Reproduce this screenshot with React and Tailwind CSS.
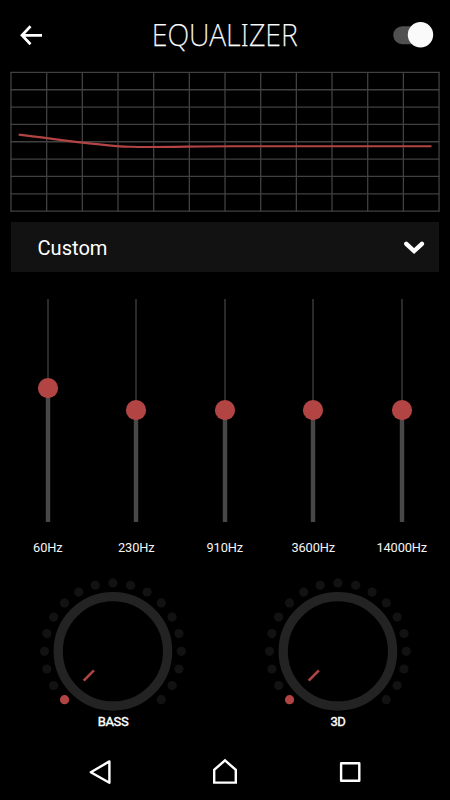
const bands = [
  { label: "60Hz", value: 89.2 },
  { label: "230Hz", value: 111.2 },
  { label: "910Hz", value: 111.2 },
  { label: "3600Hz", value: 111.2 },
  { label: "14000Hz", value: 111.2 },
];

function ResponseGraph() {
  const columns = Array.from({ length: 13 }, (_, i) => 1 + i * 35.67);
  const rows = Array.from({ length: 9 }, (_, i) => 1.4 + i * 17.34);
  return (
    <svg className="ml-2.5 block h-[141px] w-[430px] shrink-0" viewBox="0 0 430 141" fill="none">
      <g stroke="#414141" strokeWidth="1.3">
        {columns.map((x) => (
          <line key={x} x1={x} x2={x} y1="0.9" y2="140.6" />
        ))}
        {rows.map((y) => (
          <line key={y} x1="0.5" x2="429.5" y1={y} y2={y} />
        ))}
      </g>
      <path d="M8.7 63.6C45 67.8 88 74.8 120 75.8C155 76.5 180 75.2 225 75.2H421.5" stroke="#b34444" strokeWidth="2.1" />
    </svg>
  );
}

function Band({ label, value }) {
  return (
    <div className="flex flex-col items-center">
      <svg className="block h-[223px] w-6" viewBox="0 0 24 223">
        <rect x="11.35" y="0" width="1.3" height="223" fill="#414141" />
        <rect x="9.8" y={value} width="4.4" height={223 - value} fill="#484848" />
        <circle cx="12" cy={value} r="10.1" fill="#b34444" />
      </svg>
      <span className="mt-[17px] text-[12.8px] leading-[18px] tracking-[-0.1px] text-[#f5f5f5]">{label}</span>
    </div>
  );
}

function Knob({ label }) {
  const dots = Array.from({ length: 19 }, (_, i) => ((-135 + i * 15) * Math.PI) / 180);
  return (
    <div className="flex w-[225px] flex-col items-center">
      <svg className="block h-[136px] w-[148px]" viewBox="0 0 148 136" fill="none">
        <circle cx="73.9" cy="74.3" r="54.7" stroke="#232323" strokeWidth="9.3" />
        {dots.map((a, i) => (
          <circle
            key={i}
            cx={73.9 + 68.4 * Math.sin(a)}
            cy={74.3 - 68.4 * Math.cos(a)}
            r="4.6"
            fill={i === 0 ? "#b34444" : "#121212"}
          />
        ))}
        <path d="M44.7 103.6L54.9 93.4" stroke="#b34444" strokeWidth="2.6" />
      </svg>
      <span className="pl-px text-[13px] leading-[18px] tracking-[-0.4px] text-white [-webkit-text-stroke:0.4px_white]">{label}</span>
    </div>
  );
}

export default function App() {
  return (
    <main className="flex h-[800px] w-[450px] flex-col overflow-hidden bg-black font-['Roboto',sans-serif] text-white">
      <header className="flex h-[71px] shrink-0 items-center justify-between pl-[18px] pr-4">
        <svg className="h-6 w-[42px]" viewBox="0 0 42 24" fill="none" stroke="#fff" strokeWidth="2.7">
          <path d="M12.5 2.3L4 11.3L12.5 20.3M4.2 11.3H24" />
        </svg>
        <h1 className="mb-[3px] mr-[2px] origin-center scale-x-[0.905] whitespace-nowrap font-['Noto_Sans',sans-serif] text-[31.5px] font-extralight leading-10 [-webkit-text-stroke:0.25px_white]">
          EQUALIZER
        </h1>
        <svg className="h-[27px] w-[42px]" viewBox="0 0 42 27">
          <rect x="1.3" y="4.2" width="36" height="18" rx="9" fill="#505050" />
          <circle cx="28.5" cy="12.8" r="12.7" fill="#fafafa" />
        </svg>
      </header>

      <ResponseGraph />

      <button className="mx-[11px] mt-[10px] flex h-[50px] shrink-0 items-center justify-between bg-[#121212] pl-[26.5px] pr-[14px] text-[20.1px]">
        <span className="pt-[2px]">Custom</span>
        <svg className="h-4 w-[22px]" viewBox="0 0 22 16" fill="none">
          <path d="M3.3 4.8L11.1 12.1L18.9 4.8" stroke="#fff" strokeWidth="4.4" strokeLinecap="round" />
        </svg>
      </button>

      <section className="ml-[3.6px] mr-[4px] mt-[27px] grid shrink-0 grid-cols-5">
        {bands.map((band) => (
          <Band key={band.label} {...band} />
        ))}
      </section>

      <section className="mt-5 flex shrink-0">
        <Knob label="BASS" />
        <Knob label="3D" />
      </section>

      <nav className="mt-[21px] flex h-10 shrink-0 items-center justify-between px-[86px]">
        <svg className="size-7" viewBox="0 0 28 28" fill="none" stroke="#fff" strokeWidth="2.4" strokeLinejoin="round">
          <path d="M4.8 14.2L23.4 3.4V24.8Z" />
        </svg>
        <svg className="size-7" viewBox="0 0 28 28" fill="none" stroke="#fff" strokeWidth="2.4">
          <path d="M3.2 24.6V11.8L14 2.4L24.8 11.8V24.6Z" />
        </svg>
        <svg className="size-7" viewBox="0 0 28 28" fill="none" stroke="#fff" strokeWidth="2.4" strokeLinejoin="round">
          <rect x="5.1" y="5.3" width="18.2" height="17.4" />
        </svg>
      </nav>
    </main>
  );
}
